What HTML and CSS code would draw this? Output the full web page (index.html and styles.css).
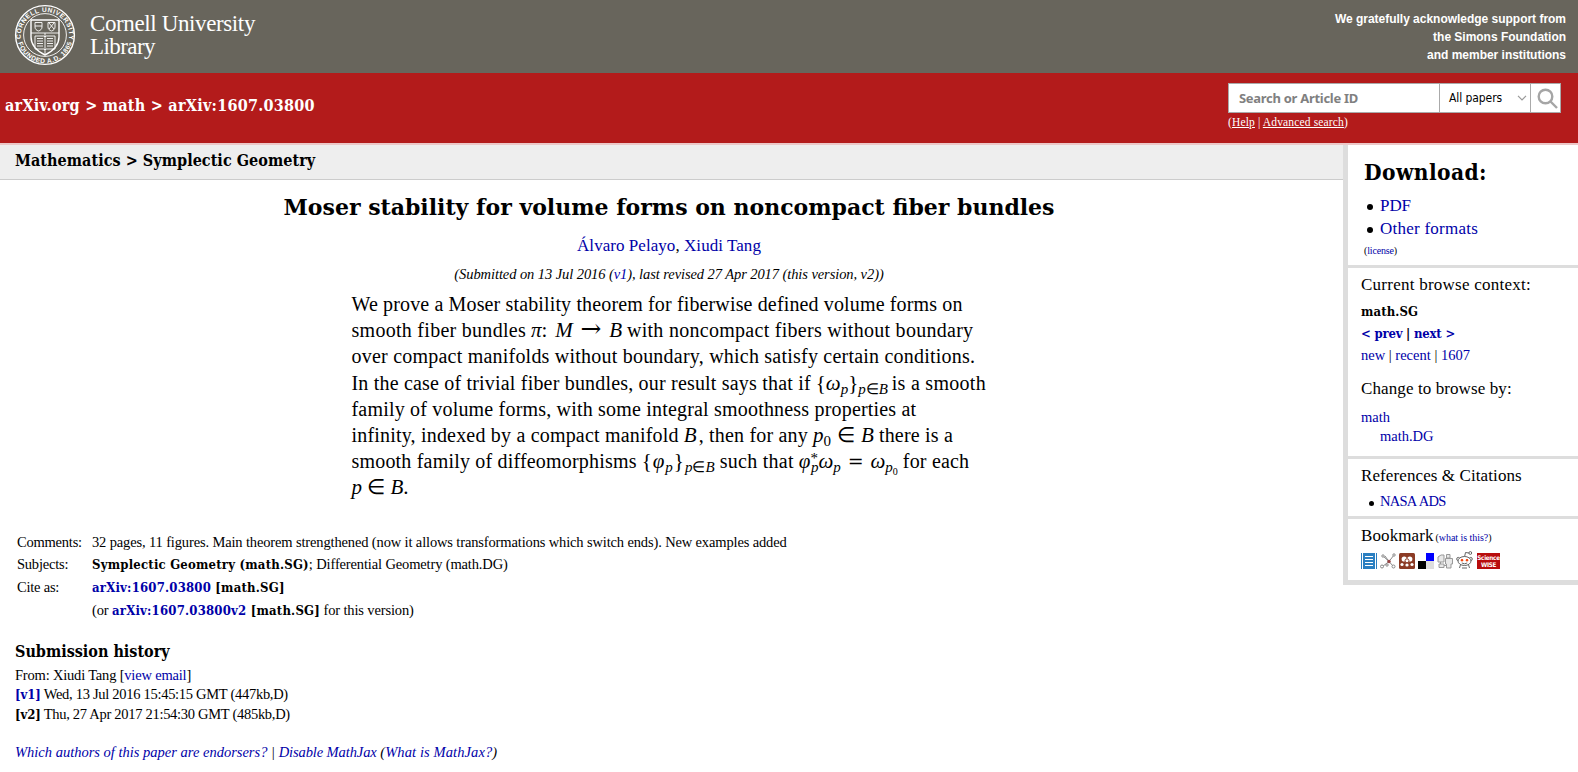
FILE: index.html
```html
<!DOCTYPE html>
<html lang="en">
<head>
<meta charset="utf-8">
<title>[1607.03800] Moser stability for volume forms on noncompact fiber bundles</title>
<link rel="stylesheet" href="styles.css">
</head>
<body>
<header class="cu-header">
  <a class="cu-logo">
    <svg class="seal" viewBox="0 0 62 62" width="62" height="62">
      <defs>
        <path id="arc-top" d="M7.5 38A24.200 24.200 0 1 1 54.500 38"/>
        <path id="arc-bottom" d="M3.600 37A28 28 0 0 0 58.400 37"/>
      </defs>
      <circle cx="31" cy="31" r="29.4" class="ring"/>
      <circle cx="31" cy="31" r="21.4" class="ring thin"/>
      <text class="seal-text"><textPath href="#arc-top" textLength="82" startOffset="3">CORNELL UNIVERSITY</textPath></text>
      <text class="seal-text"><textPath href="#arc-bottom" textLength="72" startOffset="2">FOUNDED A.D. 1865</textPath></text>
      <path class="ring" d="M17 16H45V33C45 42 39 47 31 51C23 47 17 42 17 33Z"/>
      <path class="thin ring" d="M17 29H45M31 29V50M21 18.500H28V23C28 25 26.500 26.500 24.500 27C22.500 26.500 21 25 21 23ZM34 18.500H41V23C41 25 39.500 26.500 37.500 27C35.500 26.500 34 25 34 23ZM21 22H28M35 19L40 25M40 19L35 25"/>
      <path class="thin ring" d="M21 32H30L31 33L32 32H41V45H32L31 46L30 45H21ZM23 34.500H29M23 37H29M23 39.500H29M23 42H29M33 34.500H39M33 37H39M33 39.500H39M33 42H39"/>
    </svg>
    <span class="cu-name">Cornell University<br><span class="tighter">Library</span></span>
  </a>
  <p class="support">We gratefully acknowledge support from<br>the Simons Foundation<br>and member institutions</p>
</header>
<div class="banner">
  <h1>arXiv.org &gt; math &gt; arXiv:1607.03800</h1>
  <form class="search">
    <div class="search-row">
      <div class="field">Search or Article ID</div>
      <div class="select"><span>All papers</span><svg width="10" height="6" viewBox="0 0 10 6"><path d="M1 .8L5 4.800L9 .8"/></svg></div>
      <div class="go"><svg width="22" height="22" viewBox="0 0 22 22"><circle cx="8.500" cy="8.500" r="6.800"/><path d="M13.500 13.500L20 20"/></svg></div>
    </div>
    <div class="search-help">(<a>Help</a> | <a>Advanced search</a>)</div>
  </form>
</div>
<div class="content">
  <main>
    <div class="subject">Mathematics &gt; Symplectic Geometry</div>
    <h2 class="title">Moser stability for volume forms on noncompact fiber bundles</h2>
    <div class="authors"><a>Álvaro Pelayo</a>, <a>Xiudi Tang</a></div>
    <div class="dateline">(Submitted on 13 Jul 2016 (<a>v1</a>), last revised 27 Apr 2017 (this version, v2))</div>
    <div class="abstract">
      <div class="line"><span class="snug">We prove a Moser stability theorem for fiberwise defined volume forms on</span></div>
      <div class="line"><span class="wide">smooth fiber bundles</span><span class="math w-map"><span><i>π</i>:</span><i>M</i><span class="arrow">→</span><i>B</i></span><span class="wide">with noncompact fibers without boundary</span></div>
      <div class="line"><span class="open">over compact manifolds without boundary, which satisfy certain conditions.</span></div>
      <div class="line"><span>In the case of trivial fiber bundles, our result says that if</span><span class="math w-fam">{<i>ω</i><sub><i>p</i></sub>}<sub><i>p</i>∈<i>B</i></sub></span><span class="wide">is a smooth</span></div>
      <div class="line"><span>family of volume forms, with some integral smoothness properties at</span></div>
      <div class="line"><span>infinity, indexed by a compact manifold</span><span class="math w-b"><i>B</i></span><span class="comma">, then for any</span><span class="math w-p0"><span><i>p</i><sub>0</sub></span><span>∈</span><i>B</i></span><span>there is a</span></div>
      <div class="line"><span>smooth family of diffeomorphisms</span><span class="math w-fam2">{<i>φ</i><sub><i>p</i></sub>}<sub><i>p</i>∈<i>B</i></sub></span><span class="wide">such that</span><span class="math w-eq"><span><i>φ</i><sup>*</sup><sub><i>p</i></sub><i>ω</i><sub><i>p</i></sub></span><span class="equals">=</span><span><i>ω</i><sub><i>p</i><small>0</small></sub></span></span><span>for each</span></div>
      <div class="line"><span class="math w-pb"><i>p</i><span>∈</span><span><i>B</i>.</span></span></div>
    </div>
    <div class="meta">
      <span class="label">Comments:</span><div>32 pages, 11 figures. Main theorem strengthened (now it allows transformations which switch ends). New examples added</div>
      <span class="label">Subjects:</span><div><b>Symplectic Geometry (math.SG)</b>; Differential Geometry (math.DG)</div>
      <span class="label">Cite as:</span><div><b><a>arXiv:1607.03800</a> [math.SG]</b></div>
      <span></span><div>(or <b><a>arXiv:1607.03800v2</a> [math.SG]</b> for this version)</div>
    </div>
    <h3 class="history-title">Submission history</h3>
    <div class="history">
      <div class="from">From: Xiudi Tang [<a>view email</a>]</div>
      <div><b><a>[v1]</a></b> Wed, 13 Jul 2016 15:45:15 GMT (447kb,D)</div>
      <div><b>[v2]</b> Thu, 27 Apr 2017 21:54:30 GMT (485kb,D)</div>
    </div>
    <div class="footer-links"><a>Which authors of this paper are endorsers?</a> <span>|</span> <a class="disable">Disable MathJax</a> <span class="what">(<a>What is MathJax?</a>)</span></div>
  </main>
  <aside>
    <section class="download">
      <h2>Download:</h2>
      <ul><li><a class="pdf">PDF</a></li><li><a>Other formats</a></li></ul>
      <div class="license">(<a>license</a>)</div>
    </section>
    <section class="browse">
      <h3 class="current">Current browse context:</h3>
      <div class="context">
        <div><b class="archive">math.SG</b></div>
        <div><b class="pager"><a>&lt; prev</a> | <a>next &gt;</a></b></div>
        <div><a>new</a> | <a>recent</a> | <a>1607</a></div>
      </div>
      <h3 class="change">Change to browse by:</h3>
      <div class="archives"><div><a>math</a></div><div class="sub"><a>math.DG</a></div></div>
    </section>
    <section class="refs">
      <h3>References &amp; Citations</h3>
      <ul><li><a>NASA ADS</a></li></ul>
    </section>
    <section class="bookmark">
      <h3>Bookmark<small>(<a>what is this?</a>)</small></h3>
      <div class="icons">
        <svg width="16" height="16" viewBox="0 0 16 16"><path fill="#2a7fc1" d="M0 0H1V16H0ZM2 0H14V16H2ZM15 0H16V16H15Z"/><path stroke="#fff" stroke-width="1.200" d="M4 3.500H12M4 6.500H12M4 9.500H12M4 12.500H12"/></svg>
        <svg width="16" height="16" viewBox="0 0 16 16" fill="#fff" stroke="#888"><path d="M3 3L9 8.500L14 2M9 8.500L2.500 13.500M9 8.500L13.500 13.500M5 3L9 8.500"/><circle cx="3" cy="3" r="1.200"/><circle cx="14" cy="2" r="1.200"/><circle cx="2" cy="13.500" r="1.500"/><circle cx="7" cy="12" r="1.200"/><circle cx="13.500" cy="13.500" r="1.500"/><circle cx="9" cy="8.500" r="1.300" fill="#944" stroke="#944"/></svg>
        <svg width="16" height="16" viewBox="0 0 16 16"><rect width="16" height="16" rx="1.500" fill="#8c3b25"/><circle cx="5.200" cy="6" r="2.600" fill="#fff"/><circle cx="10.800" cy="6" r="2.600" fill="#fff"/><circle cx="8" cy="7.800" r="2" fill="#fff" stroke="#8c3b25"/><circle cx="3" cy="11.500" r="1.600" fill="#fff"/><circle cx="8" cy="12" r="1.600" fill="#fff"/><circle cx="13" cy="11.500" r="1.600" fill="#fff"/></svg>
        <svg width="16" height="16" viewBox="0 0 16 16"><path fill="#00f" d="M8 0H16V8H8Z"/><path d="M0 8H8V16H0Z"/><path fill="#ddd" d="M8 8H16V16H8Z"/></svg>
        <svg width="16" height="16" viewBox="0 0 16 16" fill="#e8e8e8" stroke="#999"><path d="M1 9V4L4 2H7V9ZM2 11H7V14.500H2ZM9.500 1.500H13V5H9.500ZM8.500 5.500H15.500V11H14V15H9.500V11H8.500Z"/><path d="M3.500 9V11M7 12.500H9.500"/></svg>
        <svg width="17" height="18" viewBox="0 0 17 18" fill="#fff" stroke="#666"><path d="M8.500 6L9.500 1.500L13 2"/><circle cx="14.300" cy="2" r="1.400"/><path d="M5 12L3.500 17M12 12L13.500 17M6 17H11"/><circle cx="2.300" cy="8" r="1.600"/><circle cx="14.700" cy="8" r="1.600"/><ellipse cx="8.500" cy="10" rx="6.500" ry="4.500"/><circle cx="6" cy="9.200" r=".9" fill="#f43c00" stroke="#f43c00"/><circle cx="11" cy="9.200" r=".9" fill="#f43c00" stroke="#f43c00"/><path fill="none" d="M5.800 12Q8.500 13.600 11.200 12"/></svg>
        <span class="sciwise">Science<br>WISE</span>
      </div>
    </section>
  </aside>
</div>
</body>
</html>
```
FILE: styles.css
```css
body { margin: 0; background: #fff; color: #000; font: 14.5px/18px "Liberation Serif", serif; overflow: hidden; }
a { color: #0000a8; }
h1, h2, h3, p, ul { margin: 0; padding: 0; font-weight: normal; }
ul { list-style: none; }

/* Site header */
.cu-header { height: 73px; background: #68655c; display: flex; justify-content: space-between; color: #fff; }
.cu-logo { display: flex; color: #fff; padding: 4px 0 0 14px; }
.ring { fill: none; stroke: #fff; stroke-width: 1.4; }
.ring.thin { stroke-width: .9; }
.seal-text { fill: #fff; font: bold 6.6px "Liberation Sans", sans-serif; }
.cu-name { font-size: 23px; line-height: 23px; margin: 8px 0 0 14px; white-space: nowrap; letter-spacing: -.38px; }
.tighter { letter-spacing: -.57px; }
.support { font: bold 12px/18px "Liberation Sans", sans-serif; letter-spacing: -.02px; text-align: right; padding: 10px 12px 0 0; }

/* Red banner and search */
.banner { height: 70px; background: #b31b1b; border-bottom: 2px solid #ecc8c8; display: flex; justify-content: space-between; color: #fff; }
.banner h1, .subject, .history-title, .download h2, b { font-family: "DejaVu Serif Condensed", "DejaVu Serif", serif; font-stretch: condensed; font-weight: bold; }
.banner h1 { font-size: 16px; line-height: 20px; padding: 23px 0 0 5px; white-space: nowrap; letter-spacing: .26px; }
.search { padding: 10px 17px 0 0; width: 333px; }
.search-row { display: flex; height: 30px; box-sizing: border-box; border: 1px solid #aaa; background: #fff; font: 13px/28px "Noto Sans", sans-serif; color: #000; }
.field { width: 210px; padding-left: 10px; box-sizing: border-box; color: #808080; font-weight: bold; letter-spacing: -.29px; }
.select { width: 92px; box-sizing: border-box; border-left: 1px solid #aaa; border-right: 1px solid #aaa; padding: 0 3px 0 9px; display: flex; justify-content: space-between; align-items: center; font-family: "DejaVu Sans Condensed", "DejaVu Sans", sans-serif; font-stretch: condensed; font-size: 12px; letter-spacing: -.08px; }
.select svg, .go svg { fill: none; stroke: #999; stroke-width: 1.2; }
.go { padding: 4px 0 0 6px; line-height: 0; }
.go svg { stroke: #a5a5a5; stroke-width: 2.4; }
.search-help { font-size: 11.5px; line-height: 14px; padding-top: 2px; letter-spacing: .15px; }
.search-help a { color: #fff; text-decoration: underline; }

/* Article */
.content { display: flex; align-items: flex-start; }
main { width: 1343px; }
.subject { height: 35px; box-sizing: border-box; border-bottom: 1px solid #ccc; background: #eee; font-size: 16px; line-height: 20px; padding: 6px 0 0 15px; letter-spacing: .05px; }
.title { font: bold 22px/30px "DejaVu Serif", serif; text-align: center; margin-top: 12px; padding-right: 5px; white-space: nowrap; }
.authors { font-size: 17px; line-height: 20px; text-align: center; margin-top: 14px; padding-right: 5px; letter-spacing: .05px; }
.dateline { font-style: italic; text-align: center; margin-top: 9px; padding-right: 5px; letter-spacing: -.08px; }
.abstract { font-size: 20px; line-height: 26.2px; margin: 8px 0 0 351.5px; letter-spacing: .19px; }
.snug { letter-spacing: .14px; }
.open { letter-spacing: .22px; }
.wide { letter-spacing: .28px; }
.line { display: flex; gap: 5px; height: 26.2px; white-space: nowrap; align-items: baseline; }
.math { display: inline-flex; justify-content: space-between; align-items: baseline; font-size: 21px; line-height: 26.2px; letter-spacing: 0; }
.math sub, .math sup { font-size: 15px; line-height: 0; position: relative; top: 4px; vertical-align: baseline; }
.math sup { top: -5px; margin-right: -7px; }
.math small { font-size: 10px; position: relative; top: 3px; }
.arrow { font: 25px/20px "DejaVu Serif", serif; }
.equals { font: 19px/20px "DejaVu Serif", serif; }
.comma { margin-left: -4px; }
.w-map { width: 91px; }
.w-fam { width: 71px; }
.w-fam2 { width: 73px; }
.w-b { width: 14px; }
.w-p0 { width: 61px; }
.w-eq { width: 99px; }
.w-pb { width: 57px; }
.meta { display: grid; grid-template-columns: 75px auto; line-height: 22.8px; margin: 30px 0 0 17px; letter-spacing: -.14px; }
.meta > *, .history > div { white-space: nowrap; }
.label { letter-spacing: -.22px; }
b { font-size: 13px; line-height: 0; letter-spacing: .21px; }
.history-title { font-size: 16px; line-height: 20px; margin: 20px 0 0 15px; }
.history { line-height: 19.5px; margin: 4px 0 0 15px; letter-spacing: -.29px; }
.history .from { letter-spacing: -.19px; }
.history b { letter-spacing: -.1px; }
.footer-links { font-style: italic; margin: 19px 0 0 15px; }
.footer-links .disable { letter-spacing: -.1px; }
.footer-links .what { letter-spacing: .1px; }

/* Sidebar */
aside { width: 230px; border-left: 5px solid #ddd; }
aside section { box-sizing: border-box; border-bottom: 3px solid #ddd; padding: 7px 0 0 13px; white-space: nowrap; }
aside h3 { font-size: 17px; line-height: 20px; letter-spacing: .1px; }
aside .download { height: 123px; padding: 12px 0 0 16px; }
.download h2 { font-size: 22.5px; line-height: 30px; letter-spacing: .43px; }
.download ul { margin-top: 7px; letter-spacing: .24px; }
.download .pdf { letter-spacing: -.06px; }
.download li, .refs li { font-size: 17px; line-height: 23px; display: flex; align-items: center; }
.download li::before, .refs li::before { content: ""; width: 6px; height: 6px; border-radius: 50%; background: #000; margin: 2px 7px 0 3px; }
.license { font-size: 10px; line-height: 14px; margin-top: 4px; letter-spacing: -.16px; }
.browse { height: 191px; }
.current { letter-spacing: .25px; }
.context { line-height: 22px; margin-top: 5px; }
.context .archive { letter-spacing: .09px; }
.context .pager { letter-spacing: -.2px; }
.change { margin-top: 13px; }
.archives { line-height: 19px; margin-top: 9px; }
.archives .sub { padding-left: 19px; }
.refs { height: 60px; }
.refs ul { margin-top: 6px; }
.refs li { font-size: 14.5px; line-height: 19px; letter-spacing: -.75px; }
.refs li a { word-spacing: 1px; }
.refs li::before { width: 5px; height: 5px; margin: 3px 6px 0 8px; }
aside .bookmark { height: 66px; border-bottom-width: 5px; }
.bookmark small { font-size: 10px; margin-left: 2px; letter-spacing: -.05px; }
.icons { display: flex; gap: 3px; margin-top: 5px; height: 16px; align-items: flex-end; }
.icons svg { flex: none; }
.sciwise { background: #b80d0d; color: #fff; font: bold 6.3px/7px "DejaVu Sans Condensed", "DejaVu Sans", sans-serif; font-stretch: condensed; width: 23px; height: 15px; padding-top: 1px; text-align: center; letter-spacing: -.3px; margin-left: 1px; }
```
